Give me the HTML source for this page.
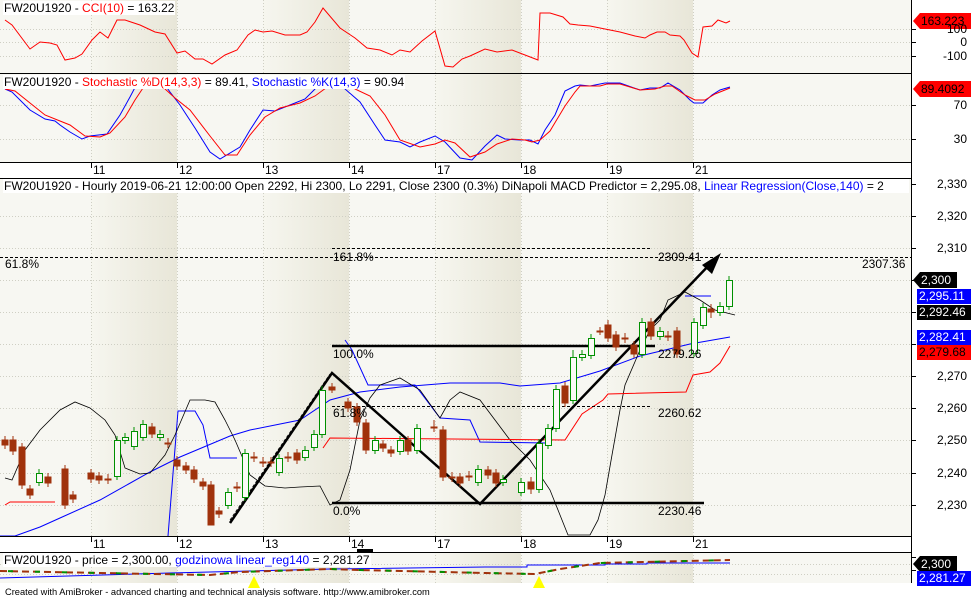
<!DOCTYPE html>
<html><head><meta charset="utf-8"><style>
body{margin:0;width:971px;height:599px;overflow:hidden;background:#fff;font-family:"Liberation Sans",sans-serif;}
.t{position:absolute;font-size:12px;line-height:14px;background:#fff;white-space:nowrap;color:#000;padding:0 1px}
.l{position:absolute;font-size:12px;line-height:14px;white-space:nowrap;color:#000}
.ax{position:absolute;font-size:12px;line-height:14px;right:4px;text-align:right}
.tag{position:absolute;left:917px;width:54px;height:15px;font-size:12px;line-height:15px;color:#fff;padding-left:2px;box-sizing:border-box}
</style></head><body>
<svg width="971" height="599" style="position:absolute;left:0;top:0">
<defs>
<linearGradient id="g" x1="0" x2="1"><stop offset="0" stop-color="#f6f6ef"/><stop offset="1" stop-color="#e8e6d8"/></linearGradient>
<clipPath id="c1"><rect x="0" y="0" width="911" height="73"/></clipPath>
<clipPath id="c2"><rect x="0" y="74" width="911" height="88"/></clipPath>
<clipPath id="c3"><rect x="0" y="179" width="911" height="357"/></clipPath>
</defs>
<g>
<rect x="0" y="0" width="911" height="162" fill="#f7f7f2"/>
<rect x="0" y="178" width="911" height="358" fill="#f7f7f2"/>
<rect x="0" y="552" width="911" height="31" fill="#f7f7f2"/>
<g fill="url(#g)">
<rect x="91" y="0" width="86" height="162"/><rect x="263" y="0" width="86" height="162"/><rect x="435" y="0" width="86" height="162"/><rect x="607" y="0" width="86" height="162"/>
<rect x="91" y="178" width="86" height="358"/><rect x="263" y="178" width="86" height="358"/><rect x="435" y="178" width="86" height="358"/><rect x="607" y="178" width="86" height="358"/>
<rect x="91" y="552" width="86" height="31"/><rect x="263" y="552" width="86" height="31"/><rect x="435" y="552" width="86" height="31"/><rect x="607" y="552" width="86" height="31"/>
</g>
</g>
<g stroke="#cfcfc4" stroke-dasharray="1,2" stroke-width="1">
<path d="M0 29.5H911M0 42.5H911M0 56.5H911M0 105.5H911M0 139.5H911"/>
<path d="M0 216.5H911M0 248.5H911M0 280.5H911M0 312.5H911M0 344.5H911M0 376.5H911M0 408.5H911M0 440.5H911M0 473.5H911M0 505.5H911M0 564.5H911M0 574.5H911"/>
<path d="M91.5 0V162M177.5 0V162M263.5 0V162M349.5 0V162M435.5 0V162M521.5 0V162M607.5 0V162M693.5 0V162"/>
<path d="M91.5 178V536M177.5 178V536M263.5 178V536M349.5 178V536M435.5 178V536M521.5 178V536M607.5 178V536M693.5 178V536"/>
<path d="M91.5 552V583M177.5 552V583M263.5 552V583M349.5 552V583M435.5 552V583M521.5 552V583M607.5 552V583M693.5 552V583"/>
</g>
<polyline clip-path="url(#c1)" fill="none" stroke="#f00" stroke-width="1" points="5,20 12,25 30,49 40,42 50,43 57,45 65,60 75,58 82,54 92,40 100,32 108,38 117,20 125,20 140,25 155,32 165,34 177,53 185,51 195,59 203,59 212,64 225,55 237,50 248,35 255,30 263,32 272,31 285,35 300,35 307,32 315,22 323,8 340,28 355,38 367,48 380,50 392,55 400,50 410,52 422,41 435,31 445,66 453,67 462,59 470,56 485,49 497,52 512,50 525,55 538,60 540,13 550,13 563,17 570,24 578,25 590,26 605,29 620,32 635,36 645,38 650,35 657,32 665,32 670,35 680,36 684,40 692,53 698,57 703,27 712,26 718,20 726,23 730,21"/>
<g clip-path="url(#c2)" fill="none" stroke-width="1">
<polyline stroke="#00f" points="5,89 12,92 30,110 45,119 55,121 60,125 70,132 82,139 90,136 107,134 120,115 130,97 140,78 160,78 170,92 180,105 195,128 210,152 220,159 240,147 250,130 263,110 275,111 290,105 305,99 315,89 322,78 340,78 345,89 360,102 375,125 385,140 400,142 410,147 420,142 435,136 445,142 460,158 472,160 485,146 497,135 505,139 520,140 530,140 538,144 545,130 555,115 560,103 565,91 575,86 580,85 590,86 605,83 620,83 634,88 640,90 650,88 660,88 668,83 680,90 690,100 694,103 703,103 712,95 720,90 730,87"/>
<polyline stroke="#f00" points="5,89 15,91 30,103 45,115 60,121 70,125 85,136 100,137 110,133 125,117 135,100 145,85 150,78 160,78 165,89 175,98 190,110 210,136 225,155 237,155 250,135 265,117 280,108 300,103 315,96 330,85 335,78 350,78 355,89 370,96 385,115 400,140 420,147 435,144 445,140 455,143 470,157 485,152 497,144 512,139 525,140 532,142 540,140 550,131 565,106 575,92 580,86 600,86 607,84 620,84 630,87 640,90 655,89 665,86 672,86 685,95 695,100 705,100 715,94 730,88"/>
</g>
<g clip-path="url(#c3)" fill="none">
<polyline stroke="#00f" points="0,536 15,536 40,527 60,518 100,500 150,472 180,457 230,436 250,430 300,420 330,400 360,392 400,387 450,383 500,383 520,386 560,383 600,371 640,356 690,344 730,337"/>
<polyline stroke="#00f" points="168,536 178,411 195,411 203,425 210,458 237,458"/>
<polyline stroke="#00f" points="345,340 352,350 368,385 415,385 440,418 470,420 480,442 545,443"/>
<polyline stroke="#00f" points="685,296 711,296"/>
<polyline stroke="#000" stroke-width="0.8" points="5,478 12,480 25,450 40,430 60,410 75,402 90,408 105,420 115,435 125,468 140,474 150,473 165,455 175,435 190,400 205,400 215,402 225,420 235,440 250,475 265,486 285,488 300,487 320,486 330,505 340,500 350,470 360,420 370,398 380,385 400,378 420,390 440,418 450,400 460,392 480,400 495,420 510,440 530,460 550,490 560,515 568,535 590,535 598,520 605,495 612,455 620,410 625,385 640,350 650,330 660,320 668,300 685,292 700,300 715,310 735,315"/>
<polyline stroke="#f00" points="5,505 10,502 55,502"/>
<polyline stroke="#f00" points="323,448 330,438 565,440 582,414 603,400 608,394 686,392 693,375 710,372 720,363 730,346"/>
</g>
<g stroke="#000" fill="none">
<path d="M332 248.5H650M0 257.5H911M332 406.5H650" stroke-dasharray="3,2"/>
<path d="M230 520L330 374" stroke-dasharray="3,2" stroke-width="0.8"/>
<path d="M332 346H655M332 503H704" stroke-width="2.5"/>
<path d="M230 523L332 373L480 504L712 262" stroke-width="2.5"/>
</g>
<polygon points="721,253 702,265 712,274" fill="#000"/>
<path fill="none" stroke="#a0320c" d="M5 436V449M13 436V455M22 443V489M30 485V499M48 473V487M65 465V509M73 491V503M91 469V483M99 472V484M108 474V484M152 423V438M168 438V448M177 456V470M186 462V474M194 466V483M203 478V490M211 481V525M219 507V518M237 482V492M254 452V462M263 457V467M271 457V467M288 452V462M297 449V464M332 383V393M348 398V412M357 403V426M366 419V454M383 440V452M391 446V457M408 436V455M434 420V432M443 426V481M452 472V482M460 473V487M469 471V481M488 466V479M496 469V487M531 477V494M565 382V407M600 327V335M608 320V342M616 331V351M625 333V343M634 341V358M651 318V340M668 331V341M677 327V358M711 304V318"/>
<g fill="#a0320c" stroke="#a0320c">
<rect x="2" y="440" width="6" height="5"/><rect x="10" y="440" width="6" height="11"/><rect x="19" y="447" width="6" height="38"/><rect x="27" y="489" width="6" height="6"/><rect x="45" y="477" width="6" height="6"/><rect x="62" y="469" width="6" height="36"/><rect x="70" y="495" width="6" height="4"/><rect x="88" y="473" width="6" height="6"/><rect x="96" y="476" width="6" height="4"/><rect x="105" y="479" width="6" height="1"/><rect x="149" y="427" width="6" height="7"/><rect x="165" y="443" width="6" height="1"/><rect x="174" y="460" width="6" height="6"/><rect x="183" y="466" width="6" height="4"/><rect x="191" y="470" width="6" height="9"/><rect x="200" y="482" width="6" height="4"/><rect x="208" y="485" width="6" height="40"/><rect x="216" y="511" width="6" height="3"/><rect x="234" y="487" width="6" height="1"/><rect x="251" y="457" width="6" height="1"/><rect x="260" y="462" width="6" height="1"/><rect x="268" y="462" width="6" height="1"/><rect x="285" y="457" width="6" height="1"/><rect x="294" y="453" width="6" height="7"/><rect x="329" y="387" width="6" height="3"/><rect x="345" y="402" width="6" height="6"/><rect x="354" y="407" width="6" height="15"/><rect x="363" y="423" width="6" height="27"/><rect x="380" y="444" width="6" height="4"/><rect x="388" y="450" width="6" height="3"/><rect x="405" y="440" width="6" height="11"/><rect x="431" y="427" width="6" height="1"/><rect x="440" y="430" width="6" height="47"/><rect x="449" y="477" width="6" height="1"/><rect x="457" y="477" width="6" height="6"/><rect x="466" y="476" width="6" height="1"/><rect x="485" y="470" width="6" height="5"/><rect x="493" y="473" width="6" height="10"/><rect x="528" y="482" width="6" height="7"/><rect x="562" y="386" width="6" height="17"/><rect x="597" y="331" width="6" height="1"/><rect x="605" y="325" width="6" height="13"/><rect x="613" y="335" width="6" height="12"/><rect x="622" y="338" width="6" height="1"/><rect x="631" y="345" width="6" height="9"/><rect x="648" y="322" width="6" height="14"/><rect x="665" y="336" width="6" height="1"/><rect x="674" y="331" width="6" height="23"/><rect x="708" y="309" width="6" height="3"/>
</g>
<path fill="none" stroke="#009000" d="M39 469V486M117 436V480M125 433V444M134 427V450M143 420V441M160 430V441M228 488V509M245 449V501M279 454V476M305 446V461M314 430V451M322 386V438M375 436V454M400 436V455M417 424V454M478 465V486M503 475V486M521 478V496M539 439V493M548 424V449M556 385V432M573 350V404M582 350V361M591 334V359M642 318V358M660 327V340M694 318V357M703 303V329M720 302V316M729 276V310"/>
<g fill="#fafaf6" stroke="#009000">
<rect x="36.5" y="473.5" width="6" height="9"/><rect x="114.5" y="440.5" width="6" height="36"/><rect x="122.5" y="437.5" width="6" height="3"/><rect x="131.5" y="431.5" width="6" height="15"/><rect x="140.5" y="424.5" width="6" height="13"/><rect x="157.5" y="434.5" width="6" height="3"/><rect x="225.5" y="492.5" width="6" height="13"/><rect x="242.5" y="453.5" width="6" height="44"/><rect x="276.5" y="458.5" width="6" height="14"/><rect x="302.5" y="450.5" width="6" height="7"/><rect x="311.5" y="434.5" width="6" height="13"/><rect x="319.5" y="390.5" width="6" height="44"/><rect x="372.5" y="440.5" width="6" height="10"/><rect x="397.5" y="440.5" width="6" height="11"/><rect x="414.5" y="428.5" width="6" height="22"/><rect x="475.5" y="469.5" width="6" height="13"/><rect x="500.5" y="479.5" width="6" height="3"/><rect x="518.5" y="482.5" width="6" height="10"/><rect x="536.5" y="443.5" width="6" height="46"/><rect x="545.5" y="428.5" width="6" height="17"/><rect x="553.5" y="389.5" width="6" height="39"/><rect x="570.5" y="357.5" width="6" height="43"/><rect x="579.5" y="354.5" width="6" height="3"/><rect x="588.5" y="338.5" width="6" height="17"/><rect x="639.5" y="322.5" width="6" height="32"/><rect x="657.5" y="331.5" width="6" height="5"/><rect x="691.5" y="322.5" width="6" height="31"/><rect x="700.5" y="307.5" width="6" height="18"/><rect x="717.5" y="306.5" width="6" height="6"/><rect x="726.5" y="280.5" width="6" height="26"/>
</g>
<polyline fill="none" stroke="#00f" points="0,578 170,573 330,569 485,567 527,567 527,565 605,565 605,564 647,564 647,563 730,563"/>
<polyline fill="none" stroke="#a0320c" stroke-width="2" stroke-dasharray="7,4" points="0,571 100,573 210,575 240,572 330,569 360,570 485,573 535,574 560,569 600,563 730,560"/>
<polyline fill="none" stroke="#009000" stroke-width="2" stroke-dasharray="5,22" stroke-dashoffset="-8" points="0,571 100,573 210,575 240,572 330,569 360,570 485,573 535,574 560,569 600,563 730,560"/>
<polygon points="254,576 248,588 260,588" fill="#ff0"/>
<polygon points="539,576 533,588 545,588" fill="#ff0"/>
<g stroke="#000" stroke-width="1">
<path d="M0 73.5H911M0 162.5H911M0 178.5H911M0 536.5H911M0 552.5H911"/>
<path d="M911.5 0V583"/>
<path d="M91.5 162V168M177.5 162V168M263.5 162V168M349.5 162V168M435.5 162V168M521.5 162V168M607.5 162V168M693.5 162V168"/>
<path d="M91.5 536V542M177.5 536V542M263.5 536V542M349.5 536V542M435.5 536V542M521.5 536V542M607.5 536V542M693.5 536V542"/>
<path d="M911 29.5H916M911 42.5H916M911 56.5H916M911 105.5H916M911 139.5H916M911 184.5H916M911 216.5H916M911 248.5H916M911 280.5H916M911 312.5H916M911 344.5H916M911 376.5H916M911 408.5H916M911 440.5H916M911 473.5H916M911 505.5H916M911 557.5H916M911 570.5H916"/>
</g>
<rect x="357" y="549" width="16" height="3" fill="#000"/>
<polygon points="913,21 920,13 971,13 971,29 920,29" fill="#f00"/>
<polygon points="913,89 920,81 971,81 971,97 920,97" fill="#f00"/>
<polygon points="913,280 920,272 957,272 957,288 920,288" fill="#000"/>
<rect x="917" y="289" width="54" height="15" fill="#00f"/>
<rect x="917" y="305" width="54" height="15" fill="#000"/>
<rect x="917" y="330" width="54" height="15" fill="#00f"/>
<rect x="917" y="345" width="54" height="15" fill="#f00"/>
<polygon points="913,564 920,556 957,556 957,572 920,572" fill="#000"/>
<rect x="917" y="571" width="54" height="15" fill="#00f"/>
</svg>
<div class="t" style="left:3px;top:1px">FW20U1920 - <span style="color:#f00">CCI(10)</span> = 163.22</div>
<div class="t" style="left:3px;top:75px">FW20U1920 - <span style="color:#f00">Stochastic %D(14,3,3)</span> = 89.41, <span style="color:#00f">Stochastic %K(14,3)</span> = 90.94</div>
<div class="t" style="left:3px;top:179px;width:904px;overflow:hidden">FW20U1920 - Hourly 2019-06-21 12:00:00 Open 2292, Hi 2300, Lo 2291, Close 2300 (0.3%) DiNapoli MACD Predictor = 2,295.08, <span style="color:#00f">Linear Regression(Close,140)</span> = 2</div>
<div class="t" style="left:3px;top:553px">FW20U1920 - price = 2,300.00, <span style="color:#00f">godzinowa linear_reg140</span> = 2,281.27</div>
<div class="l" style="left:93px;top:163px">11</div><div class="l" style="left:179px;top:163px">12</div><div class="l" style="left:265px;top:163px">13</div><div class="l" style="left:351px;top:163px">14</div><div class="l" style="left:437px;top:163px">17</div><div class="l" style="left:523px;top:163px">18</div><div class="l" style="left:609px;top:163px">19</div><div class="l" style="left:695px;top:163px">21</div>
<div class="l" style="left:93px;top:537px">11</div><div class="l" style="left:179px;top:537px">12</div><div class="l" style="left:265px;top:537px">13</div><div class="l" style="left:351px;top:537px">14</div><div class="l" style="left:437px;top:537px">17</div><div class="l" style="left:523px;top:537px">18</div><div class="l" style="left:609px;top:537px">19</div><div class="l" style="left:695px;top:537px">21</div>
<div class="l" style="left:5px;top:257px">61.8%</div><div class="l" style="left:862px;top:257px">2307.36</div>
<div class="l" style="left:333px;top:250px">161.8%</div><div class="l" style="left:658px;top:250px">2309.41</div>
<div class="l" style="left:333px;top:347px">100.0%</div><div class="l" style="left:658px;top:347px">2279.26</div>
<div class="l" style="left:333px;top:406px">61.8%</div><div class="l" style="left:658px;top:406px">2260.62</div>
<div class="l" style="left:333px;top:504px">0.0%</div><div class="l" style="left:658px;top:504px">2230.46</div>
<div class="ax" style="top:22px">100</div><div class="ax" style="top:35px">0</div><div class="ax" style="top:49px">-100</div>
<div class="ax" style="top:98px">70</div><div class="ax" style="top:132px">30</div>
<div class="ax" style="top:177px">2,330</div><div class="ax" style="top:209px">2,320</div><div class="ax" style="top:241px">2,310</div><div class="ax" style="top:369px">2,270</div><div class="ax" style="top:401px">2,260</div><div class="ax" style="top:433px">2,250</div><div class="ax" style="top:466px">2,240</div><div class="ax" style="top:498px">2,230</div>
<div class="tag" style="top:14px;color:#000;left:919px">163.223</div>
<div class="tag" style="top:82px;color:#000;left:919px">89.4092</div>
<div class="tag" style="top:273px;left:919px">2,300</div>
<div class="tag" style="top:289px">2,295.11</div>
<div class="tag" style="top:305px">2,292.46</div>
<div class="tag" style="top:330px">2,282.41</div>
<div class="tag" style="top:345px;color:#000">2,279.68</div>
<div class="tag" style="top:557px;left:919px">2,300</div>
<div class="tag" style="top:571px">2,281.27</div>
<div class="l" style="left:5px;top:586px;font-size:9.3px;line-height:12px">Created with AmiBroker - advanced charting and technical analysis software. http://www.amibroker.com</div>
</body></html>
